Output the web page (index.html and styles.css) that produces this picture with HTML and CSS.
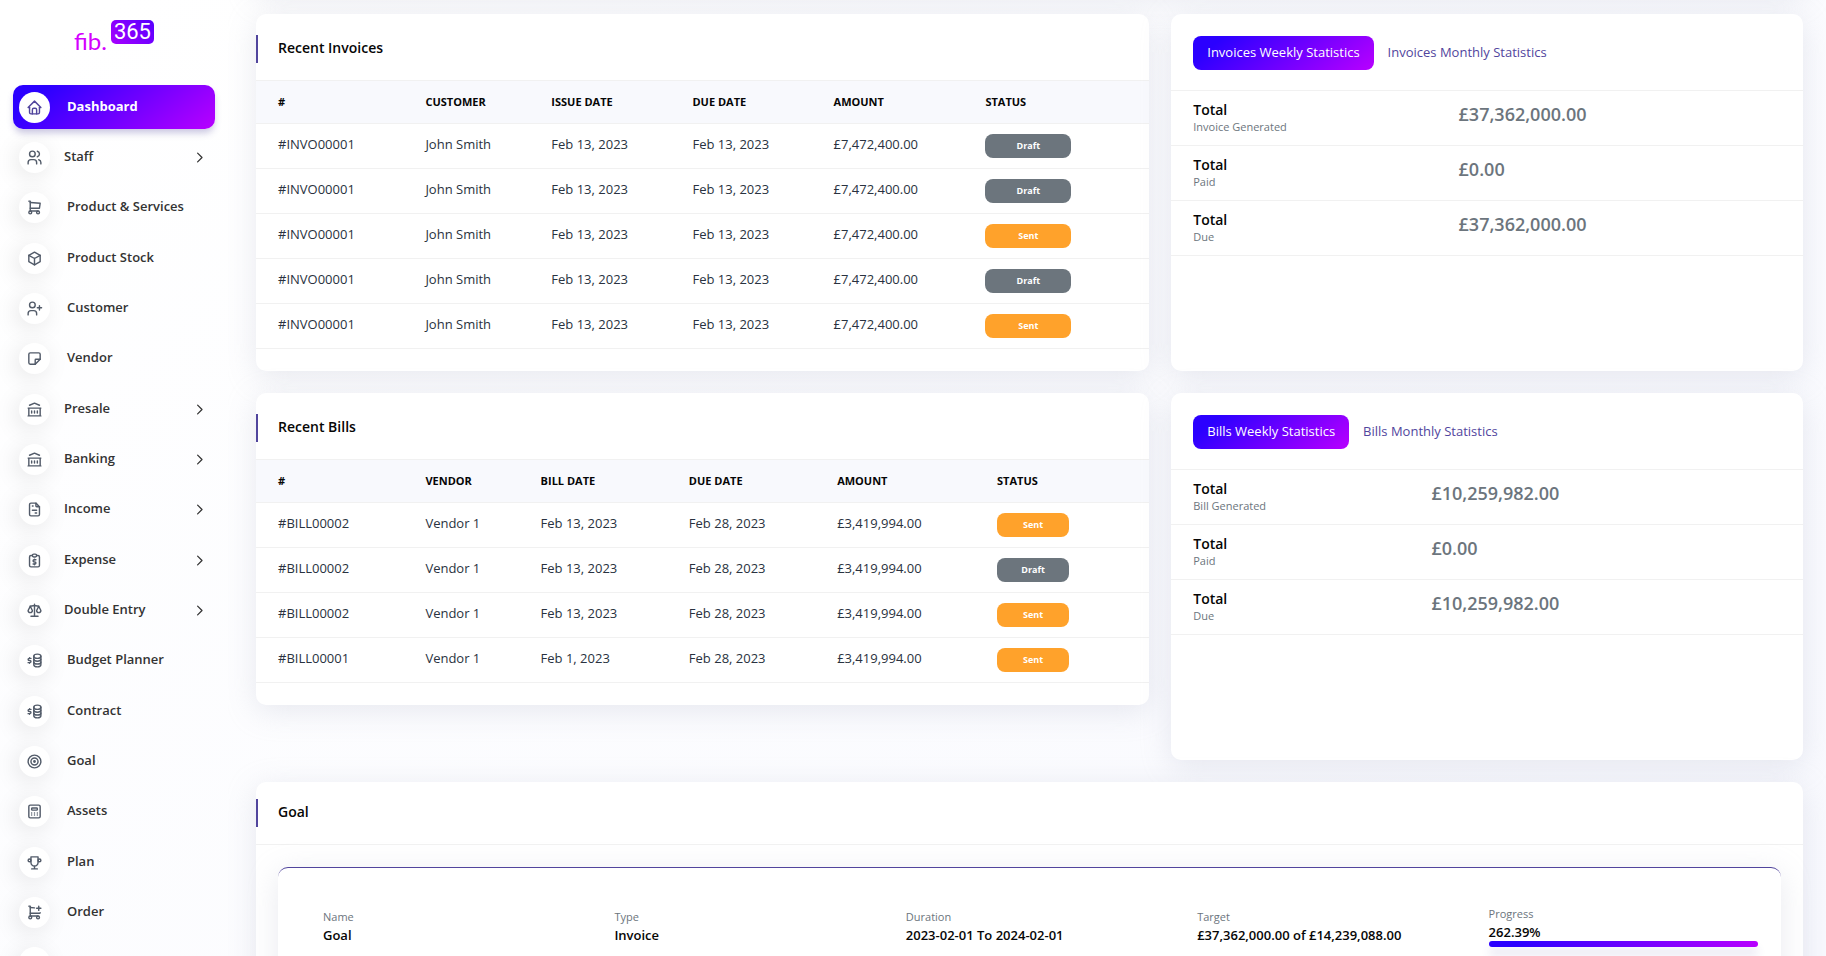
FILE: index.html
```html
<!DOCTYPE html>
<html lang="en">
<head>
<meta charset="utf-8">
<meta name="viewport" content="width=device-width, initial-scale=1">
<title>fib.365 – Dashboard</title>
<link rel="stylesheet" href="styles.css">
</head>
<body>
<svg class="sprite" aria-hidden="true">
  <symbol id="i-home" viewBox="0 0 24 24"><path d="M5 12H3l9-9 9 9h-2"/><path d="M5 12v7a2 2 0 0 0 2 2h10a2 2 0 0 0 2-2v-7"/><path d="M9 21v-6a2 2 0 0 1 2-2h2a2 2 0 0 1 2 2v6"/></symbol>
  <symbol id="i-users" viewBox="0 0 24 24"><circle cx="9" cy="7" r="4"/><path d="M3 21v-2a4 4 0 0 1 4-4h4a4 4 0 0 1 4 4v2"/><path d="M16 3.13a4 4 0 0 1 0 7.75"/><path d="M21 21v-2a4 4 0 0 0-3-3.85"/></symbol>
  <symbol id="i-cart" viewBox="0 0 24 24"><circle cx="6" cy="19" r="2"/><circle cx="17" cy="19" r="2"/><path d="M17 17H6V3H4"/><path d="M6 5l14 1-1 7H6"/></symbol>
  <symbol id="i-box" viewBox="0 0 24 24"><path d="M12 3l8 4.5v9L12 21l-8-4.5v-9L12 3"/><path d="M12 12l8-4.5M12 12v9M12 12L4 7.500"/></symbol>
  <symbol id="i-user-plus" viewBox="0 0 24 24"><circle cx="9" cy="7" r="4"/><path d="M3 21v-2a4 4 0 0 1 4-4h4a4 4 0 0 1 4 4v2"/><path d="M16 11h6M19 8v6"/></symbol>
  <symbol id="i-note" viewBox="0 0 24 24"><path d="M13 20l7-7"/><path d="M13 20v-6a1 1 0 0 1 1-1h6V6a2 2 0 0 0-2-2H6a2 2 0 0 0-2 2v12a2 2 0 0 0 2 2h7"/></symbol>
  <symbol id="i-bank" viewBox="0 0 24 24"><path d="M3 21h18M3 10h18M5 6l7-3 7 3M4 10v11M20 10v11M8 14v3M12 14v3M16 14v3"/></symbol>
  <symbol id="i-invoice" viewBox="0 0 24 24"><path d="M14 3v4a1 1 0 0 0 1 1h4"/><path d="M17 21H7a2 2 0 0 1-2-2V5a2 2 0 0 1 2-2h7l5 5v11a2 2 0 0 1-2 2z"/><path d="M9 7h1M9 13h6M13 17h2"/></symbol>
  <symbol id="i-report" viewBox="0 0 24 24"><path d="M9 5H7a2 2 0 0 0-2 2v12a2 2 0 0 0 2 2h10a2 2 0 0 0 2-2V7a2 2 0 0 0-2-2h-2"/><rect x="9" y="3" width="6" height="4" rx="2"/><path d="M14 11h-2.500a1.500 1.500 0 0 0 0 3h1a1.500 1.500 0 0 1 0 3H10"/><path d="M12 17v1m0-8v1"/></symbol>
  <symbol id="i-scale" viewBox="0 0 24 24"><path d="M7 20h10M6 6l6-1 6 1M12 3v17"/><path d="M9 12L6 6l-3 6a3 3 0 0 0 6 0M21 12l-3-6-3 6a3 3 0 0 0 6 0"/></symbol>
  <symbol id="i-coins" viewBox="0 0 24 24"><ellipse cx="16" cy="6" rx="5" ry="3"/><path d="M11 6v4c0 1.657 2.239 3 5 3s5-1.343 5-3V6"/><path d="M11 10v4c0 1.657 2.239 3 5 3s5-1.343 5-3v-4"/><path d="M11 14v4c0 1.657 2.239 3 5 3s5-1.343 5-3v-4"/><path d="M7 9H4.500a1.500 1.500 0 0 0 0 3h1a1.500 1.500 0 0 1 0 3H3M5 15v1m0-8v1"/></symbol>
  <symbol id="i-target" viewBox="0 0 24 24"><circle cx="12" cy="12" r="1"/><circle cx="12" cy="12" r="5"/><circle cx="12" cy="12" r="9"/></symbol>
  <symbol id="i-calc" viewBox="0 0 24 24"><rect x="4" y="3" width="16" height="18" rx="2"/><rect x="8" y="7" width="8" height="3" rx="1"/><path d="M8 14v.01M12 14v.01M16 14v.01M8 17v.01M12 17v.01M16 17v.01"/></symbol>
  <symbol id="i-trophy" viewBox="0 0 24 24"><path d="M8 21h8M12 17v4M7 4h10M17 4v8a5 5 0 0 1-10 0V4"/><circle cx="5" cy="9" r="2"/><circle cx="19" cy="9" r="2"/></symbol>
  <symbol id="i-cart-plus" viewBox="0 0 24 24"><circle cx="6" cy="19" r="2"/><circle cx="17" cy="19" r="2"/><path d="M17 17H6V3H4"/><path d="M6 5l6 .43M20 12.500l-.5.5H6"/><path d="M15 6h6M18 3v6"/></symbol>
  <symbol id="i-chevron" viewBox="0 0 24 24"><path d="M9 5l7 7-7 7"/></symbol>
</svg>

<div class="app">
  <aside class="sidebar">
    <a class="logo" href="#" aria-label="fib.365"><span class="logo-name">fib.</span><span class="logo-num">365</span></a>
    <nav>
      <ul class="menu">
        <li><a class="menu-item active" href="#"><span class="bubble"><svg><use href="#i-home"/></svg></span><span class="label">Dashboard</span></a></li>
        <li><button class="menu-item parent" type="button"><span class="bubble"><svg><use href="#i-users"/></svg></span><span class="label">Staff</span><svg class="chevron"><use href="#i-chevron"/></svg></button></li>
        <li><a class="menu-item" href="#"><span class="bubble"><svg><use href="#i-cart"/></svg></span><span class="label">Product &amp; Services</span></a></li>
        <li><a class="menu-item" href="#"><span class="bubble"><svg><use href="#i-box"/></svg></span><span class="label">Product Stock</span></a></li>
        <li><a class="menu-item" href="#"><span class="bubble"><svg><use href="#i-user-plus"/></svg></span><span class="label">Customer</span></a></li>
        <li><a class="menu-item" href="#"><span class="bubble"><svg><use href="#i-note"/></svg></span><span class="label">Vendor</span></a></li>
        <li><button class="menu-item parent" type="button"><span class="bubble"><svg><use href="#i-bank"/></svg></span><span class="label">Presale</span><svg class="chevron"><use href="#i-chevron"/></svg></button></li>
        <li><button class="menu-item parent" type="button"><span class="bubble"><svg><use href="#i-bank"/></svg></span><span class="label">Banking</span><svg class="chevron"><use href="#i-chevron"/></svg></button></li>
        <li><button class="menu-item parent" type="button"><span class="bubble"><svg><use href="#i-invoice"/></svg></span><span class="label">Income</span><svg class="chevron"><use href="#i-chevron"/></svg></button></li>
        <li><button class="menu-item parent" type="button"><span class="bubble"><svg><use href="#i-report"/></svg></span><span class="label">Expense</span><svg class="chevron"><use href="#i-chevron"/></svg></button></li>
        <li><button class="menu-item parent" type="button"><span class="bubble"><svg><use href="#i-scale"/></svg></span><span class="label">Double Entry</span><svg class="chevron"><use href="#i-chevron"/></svg></button></li>
        <li><a class="menu-item" href="#"><span class="bubble"><svg><use href="#i-coins"/></svg></span><span class="label">Budget Planner</span></a></li>
        <li><a class="menu-item" href="#"><span class="bubble"><svg><use href="#i-coins"/></svg></span><span class="label">Contract</span></a></li>
        <li><a class="menu-item" href="#"><span class="bubble"><svg><use href="#i-target"/></svg></span><span class="label">Goal</span></a></li>
        <li><a class="menu-item" href="#"><span class="bubble"><svg><use href="#i-calc"/></svg></span><span class="label">Assets</span></a></li>
        <li><a class="menu-item" href="#"><span class="bubble"><svg><use href="#i-trophy"/></svg></span><span class="label">Plan</span></a></li>
        <li><a class="menu-item" href="#"><span class="bubble"><svg><use href="#i-cart-plus"/></svg></span><span class="label">Order</span></a></li>
        <li><a class="menu-item" href="#"><span class="bubble"></span></a></li>
      </ul>
    </nav>
  </aside>

  <main class="content">
    <section class="card wide">
      <header class="card-head"><h2>Recent Invoices</h2></header>
      <table class="records">
        <colgroup><col style="width:16.500%"><col style="width:14.100%"><col style="width:15.800%"><col style="width:15.800%"><col style="width:17%"><col></colgroup>
        <thead><tr><th>#</th><th>Customer</th><th>Issue Date</th><th>Due Date</th><th>Amount</th><th>Status</th></tr></thead>
        <tbody>
          <tr><td>#INVO00001</td><td>John Smith</td><td>Feb 13, 2023</td><td>Feb 13, 2023</td><td>£7,472,400.00</td><td><span class="badge draft">Draft</span></td></tr>
          <tr><td>#INVO00001</td><td>John Smith</td><td>Feb 13, 2023</td><td>Feb 13, 2023</td><td>£7,472,400.00</td><td><span class="badge draft">Draft</span></td></tr>
          <tr><td>#INVO00001</td><td>John Smith</td><td>Feb 13, 2023</td><td>Feb 13, 2023</td><td>£7,472,400.00</td><td><span class="badge sent">Sent</span></td></tr>
          <tr><td>#INVO00001</td><td>John Smith</td><td>Feb 13, 2023</td><td>Feb 13, 2023</td><td>£7,472,400.00</td><td><span class="badge draft">Draft</span></td></tr>
          <tr><td>#INVO00001</td><td>John Smith</td><td>Feb 13, 2023</td><td>Feb 13, 2023</td><td>£7,472,400.00</td><td><span class="badge sent">Sent</span></td></tr>
        </tbody>
      </table>
    </section>

    <section class="card narrow">
      <div class="tabs" role="tablist">
        <button class="tab selected" type="button" role="tab" aria-selected="true">Invoices Weekly Statistics</button>
        <button class="tab" type="button" role="tab" aria-selected="false">Invoices Monthly Statistics</button>
      </div>
      <table class="stats">
        <colgroup><col style="width:42%"><col></colgroup>
        <tbody>
          <tr><th scope="row">Total<small>Invoice Generated</small></th><td>£37,362,000.00</td></tr>
          <tr><th scope="row">Total<small>Paid</small></th><td>£0.00</td></tr>
          <tr><th scope="row">Total<small>Due</small></th><td>£37,362,000.00</td></tr>
        </tbody>
      </table>
    </section>

    <section class="card wide">
      <header class="card-head"><h2>Recent Bills</h2></header>
      <table class="records bills">
        <colgroup><col style="width:16.500%"><col style="width:12.900%"><col style="width:16.600%"><col style="width:16.600%"><col style="width:17.900%"><col></colgroup>
        <thead><tr><th>#</th><th>Vendor</th><th>Bill Date</th><th>Due Date</th><th>Amount</th><th>Status</th></tr></thead>
        <tbody>
          <tr><td>#BILL00002</td><td>Vendor 1</td><td>Feb 13, 2023</td><td>Feb 28, 2023</td><td>£3,419,994.00</td><td><span class="badge sent">Sent</span></td></tr>
          <tr><td>#BILL00002</td><td>Vendor 1</td><td>Feb 13, 2023</td><td>Feb 28, 2023</td><td>£3,419,994.00</td><td><span class="badge draft">Draft</span></td></tr>
          <tr><td>#BILL00002</td><td>Vendor 1</td><td>Feb 13, 2023</td><td>Feb 28, 2023</td><td>£3,419,994.00</td><td><span class="badge sent">Sent</span></td></tr>
          <tr><td>#BILL00001</td><td>Vendor 1</td><td>Feb 1, 2023</td><td>Feb 28, 2023</td><td>£3,419,994.00</td><td><span class="badge sent">Sent</span></td></tr>
        </tbody>
      </table>
    </section>

    <section class="card narrow tall">
      <div class="tabs" role="tablist">
        <button class="tab selected" type="button" role="tab" aria-selected="true">Bills Weekly Statistics</button>
        <button class="tab" type="button" role="tab" aria-selected="false">Bills Monthly Statistics</button>
      </div>
      <table class="stats">
        <colgroup><col style="width:37.700%"><col></colgroup>
        <tbody>
          <tr><th scope="row">Total<small>Bill Generated</small></th><td>£10,259,982.00</td></tr>
          <tr><th scope="row">Total<small>Paid</small></th><td>£0.00</td></tr>
          <tr><th scope="row">Total<small>Due</small></th><td>£10,259,982.00</td></tr>
        </tbody>
      </table>
    </section>

    <section class="card full">
      <header class="card-head compact"><h2>Goal</h2></header>
      <div class="goal-wrap">
        <dl class="goal">
          <div><dt>Name</dt><dd>Goal</dd></div>
          <div><dt>Type</dt><dd>Invoice</dd></div>
          <div><dt>Duration</dt><dd>2023-02-01 To 2024-02-01</dd></div>
          <div><dt>Target</dt><dd>£37,362,000.00 of £14,239,088.00</dd></div>
          <div><dt>Progress</dt><dd>262.39%</dd><dd class="bar"></dd></div>
        </dl>
      </div>
    </section>
  </main>
</div>
</body>
</html>
```

FILE: styles.css
```css
:root {
  --grad: linear-gradient(141.55deg, #2b00ff 3.46%, #2b00ff 14%, #b800ff 99.86%);
  --accent: #51459d;
  --line: #f1f1f1;
  --muted: #6c757d;
  --card-shadow: 0 6px 30px rgba(182, 186, 203, 0.3);
}

* { box-sizing: border-box; }

body {
  margin: 0;
  font-family: "Open Sans", "Noto Sans", sans-serif;
  font-size: 13px;
  line-height: 20px;
  color: #293240;
  background: linear-gradient(141.55deg, #ffffff 3.46%, #f8f9fe 99.86%);
}

.sprite { position: absolute; width: 0; height: 0; }

svg { fill: none; stroke: currentColor; stroke-width: 2; stroke-linecap: round; stroke-linejoin: round; }

.app { display: flex; height: 100vh; overflow: hidden; }

/* Sidebar */
.sidebar { flex: none; width: 228px; padding: 0 13px; overflow: hidden; }

.logo {
  display: flex;
  justify-content: center;
  gap: 4px;
  height: 85px;
  padding-top: 20px;
  text-decoration: none;
  font-family: Lato, sans-serif;
}

.logo-name { padding-top: 9px; font-size: 24px; line-height: 24px; color: #d400ff; }

.logo-num {
  height: 24px;
  padding: 0 3px;
  border-radius: 5px;
  background: linear-gradient(45deg, #a800ff, #5500ff);
  color: #fff;
  font-family: Roboto, sans-serif;
  font-size: 22px;
  line-height: 24px;
}

.menu { margin: 0; padding: 0; list-style: none; }
.menu li { margin-bottom: 6px; }
.menu li:nth-child(3n) { margin-bottom: 7px; }

.menu-item {
  display: flex;
  align-items: center;
  gap: 17px;
  width: 202px;
  height: 44px;
  padding: 1px 8px 0 6px;
  border: 0;
  border-radius: 10px;
  background: none;
  color: #333;
  font: 600 13px/20px "Open Sans", "Noto Sans", sans-serif;
  text-align: left;
  text-decoration: none;
}

.menu-item.parent { gap: 14px; }
.menu-item .label { flex: 1; padding-bottom: 3px; }

.menu-item.active {
  background: var(--grad);
  color: #fff;
  font-weight: 700;
  box-shadow: 0 5px 7px -1px rgba(81, 69, 157, 0.3);
}

.bubble {
  display: grid;
  place-items: center;
  flex: none;
  width: 31px;
  height: 31px;
  border-radius: 50%;
  background: #fff;
  color: #525b69;
  box-shadow: -3px 4px 23px rgba(0, 0, 0, 0.1);
}

.active .bubble { color: var(--accent); box-shadow: none; }
.bubble svg { width: 17px; height: 17px; }
.chevron { width: 15px; height: 15px; }

/* Content grid, starting above the window with the edge of the panel before it */
.content {
  flex: 1;
  display: grid;
  grid-template-columns: repeat(12, minmax(0, 1fr));
  align-content: start;
  gap: 22px;
  margin-top: -68px;
  padding: 0 23px 22px 28px;
  overflow: hidden;
}

.content::before {
  content: "";
  grid-column: 1 / -1;
  height: 60px;
  border-radius: 10px;
  box-shadow: var(--card-shadow);
}

.card {
  border-radius: 10px;
  background: #fff;
  box-shadow: var(--card-shadow);
}

.wide { grid-column: span 7; align-self: start; padding-bottom: 22px; }
.narrow { grid-column: span 5; }
.tall { min-height: 367px; }
.full { grid-column: 1 / -1; }

.card-head { padding: 21px 0 17px; border-bottom: 1px solid var(--line); }
.card-head.compact { padding: 17px 0; }

.card-head h2 {
  margin: 0;
  padding: 0 0 2px 20px;
  border-left: 2px solid var(--accent);
  font-size: 14px;
  font-weight: 600;
  line-height: 26px;
  color: #060606;
}

/* Record tables */
.records, .stats { width: 100%; table-layout: fixed; border-spacing: 0; }

.records th {
  height: 43px;
  padding: 0 0 0 22px;
  background: #f8f9fd;
  border-bottom: 1px solid var(--line);
  color: #060606;
  font-size: 11px;
  font-weight: 700;
  text-align: left;
  text-transform: uppercase;
}

.records td {
  height: 45px;
  padding: 0 0 4px 22px;
  border-bottom: 1px solid var(--line);
  white-space: nowrap;
}

.records td:last-child { padding-bottom: 0; }

.badge {
  display: block;
  width: 86px;
  border-radius: 8px;
  color: #fff;
  font-size: 9px;
  font-weight: 700;
  line-height: 24px;
  text-align: center;
}

.bills .badge { width: 72px; }
.draft { background: #6c757d; }
.sent { background: #ffa22b; }

/* Statistics */
.tabs { display: flex; padding: 22px 22px 20px; border-bottom: 1px solid var(--line); }

.tab {
  height: 34px;
  padding: 0 14px 2px;
  border: 0;
  border-radius: 8px;
  background: none;
  color: var(--accent);
  font: 400 13px/20px "Open Sans", "Noto Sans", sans-serif;
}

.tab.selected { background: var(--grad); color: #fff; }

.stats th, .stats td {
  height: 55px;
  padding: 10px 0 0 22px;
  border-bottom: 1px solid var(--line);
  text-align: left;
  vertical-align: top;
}

.stats th { color: #060606; font-size: 14px; font-weight: 600; line-height: 18px; }
.stats small { display: block; color: var(--muted); font-size: 11px; font-weight: 400; line-height: 16px; }
.stats td { padding-top: 11px; color: var(--muted); font-size: 18px; font-weight: 600; line-height: 24px; }

/* Goal */
.goal-wrap { padding: 22px; }

.goal {
  display: grid;
  grid-template-columns: repeat(5, minmax(0, 1fr));
  align-items: center;
  gap: 22px;
  margin: 0;
  padding: 37px 23px 37px 45px;
  border-top: 1px solid var(--accent);
  border-radius: 10px;
  background: #fff;
  box-shadow: var(--card-shadow);
}

.goal dt { color: var(--muted); font-size: 11px; line-height: 18px; }
.goal dd { margin: 0; color: #060606; font-weight: 600; line-height: 18px; }

.goal .bar {
  height: 6px;
  border-radius: 3px;
  background: linear-gradient(90deg, #2b00ff 10%, #b800ff);
  box-shadow: 0 8px 8px rgba(81, 69, 157, 0.15);
}
```
